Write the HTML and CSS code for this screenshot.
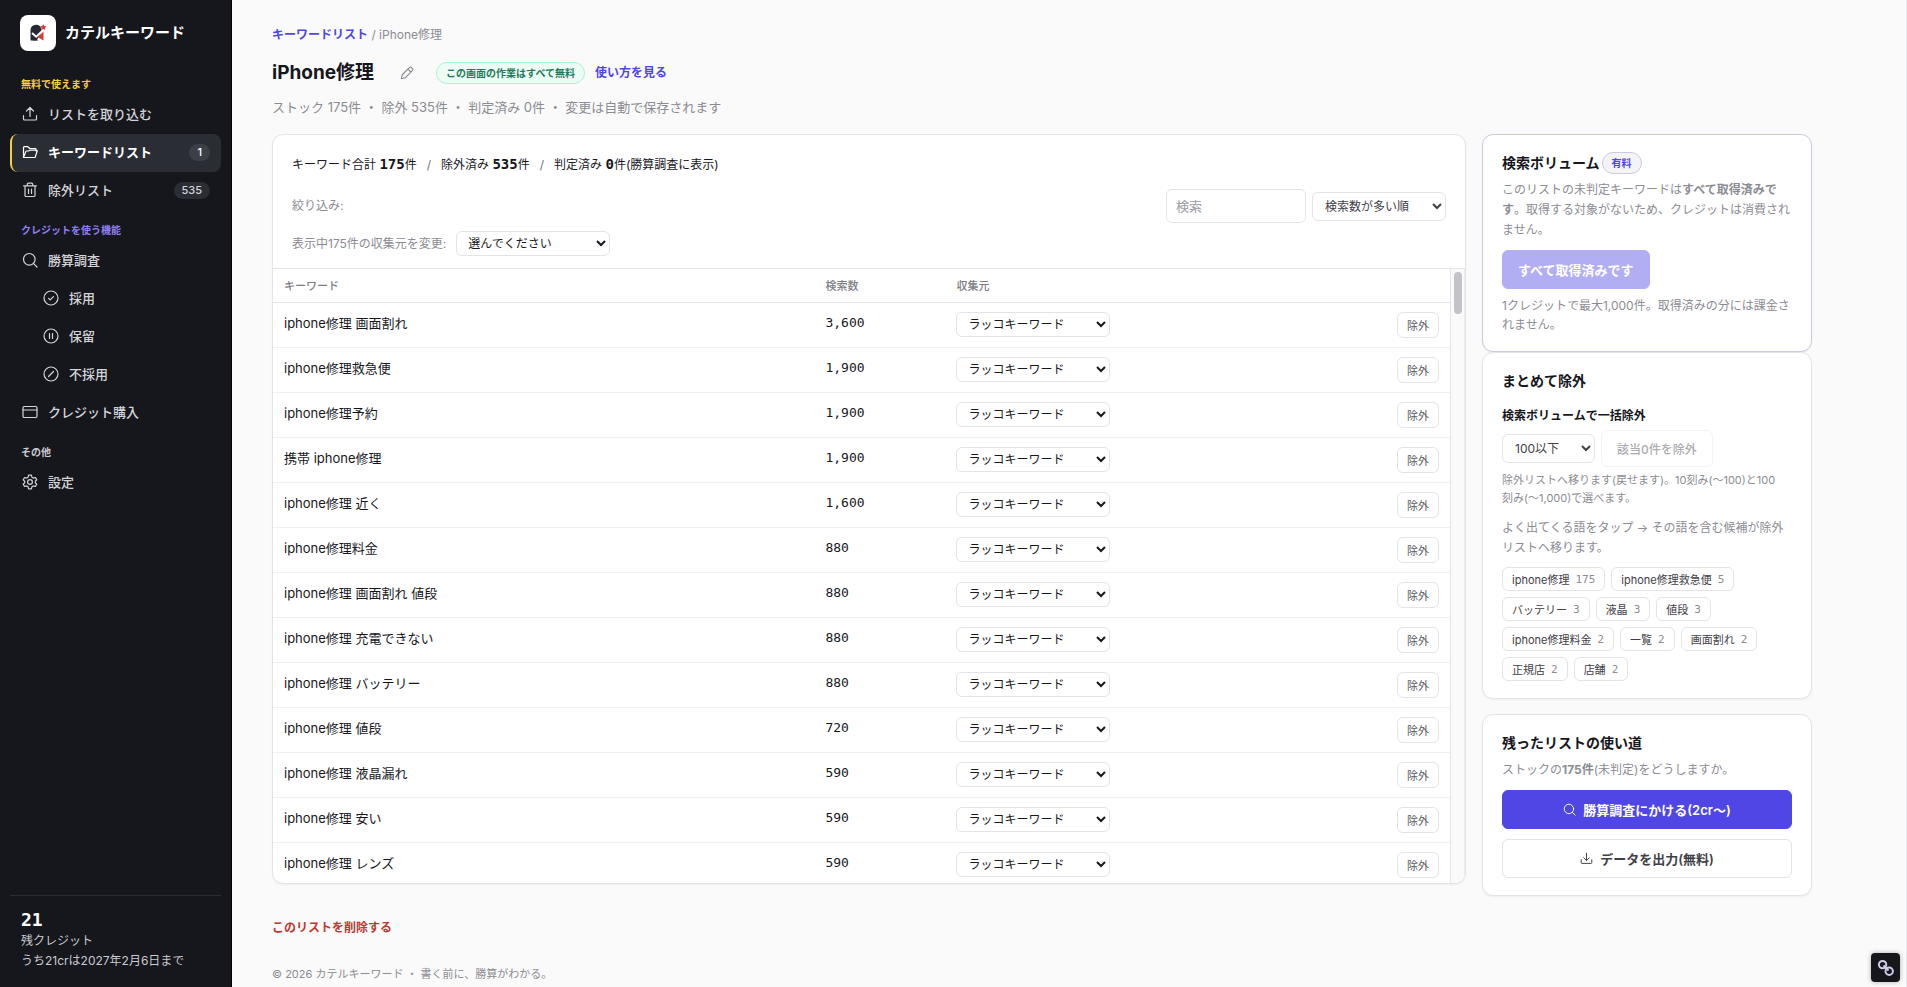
FILE: index.html
```html
<!DOCTYPE html>
<html lang="ja">
<head>
    <meta charset="UTF-8">
    <meta name="viewport" content="width=device-width, initial-scale=1">
    <title>iPhone修理 | カテルキーワード</title>
    <link rel="stylesheet" href="styles.css">
</head>
<body>
    <svg class="defs" aria-hidden="true">
        <symbol id="i-search" viewBox="0 0 16 16"><circle cx="7.3" cy="7.3" r="5.8"/><path d="M11.6 11.6 15 15"/></symbol>
        <symbol id="i-upload" viewBox="0 0 16 16"><path d="M8 10.5V1.5M4.5 5 8 1.5 11.5 5M1.5 9.5V13a1 1 0 0 0 1 1h11a1 1 0 0 0 1-1V9.5"/></symbol>
        <symbol id="i-download" viewBox="0 0 16 16"><path d="M8 1.5v9M4.5 7 8 10.5 11.5 7M1.5 9.5V13a1 1 0 0 0 1 1h11a1 1 0 0 0 1-1V9.5"/></symbol>
    </svg>
    <div class="app">
        <aside class="sidebar">
            <div class="brand">
                <span class="logo">
                    <svg width="18" height="18" viewBox="0 0 18 18">
                        <path d="M1.5 16.5V6.5a5.5 5.5 0 0 1 10.5-2.5l1 3.5-5.5 9Z" fill="#252a33"/>
                        <path d="M14.5 7.5v9L8.5 13Z" fill="#d63c36"/>
                        <path d="M14.5 16.5H9l-1.5-2-4 2Z" fill="#252a33"/>
                        <path d="m3 9 4.2 3.7 6.6-6.2" fill="none" stroke="#fff" stroke-width="2"/>
                        <path d="m14.3 0 1 2.1 2.2.3-1.6 1.5.4 2.2-2-1.1-2 1.1.4-2.2-1.6-1.5 2.2-.3Z" fill="#d63c36"/>
                    </svg>
                </span>
                <span class="brand-name">カテルキーワード</span>
            </div>
            <nav>
                <div class="nav-label free">無料で使えます</div>
                <a class="nav-item" href="#"><svg class="icon" width="16" height="16"><use href="#i-upload"/></svg>リストを取り込む</a>
                <a class="nav-item active" href="#">
                    <svg class="icon" width="16" height="16" viewBox="0 0 16 16"><path d="M1.5 13.5V3.5a.8.8 0 0 1 .8-.8h3.5l2 1.8h5.4a.8.8 0 0 1 .8.8V7M1.5 13.5l2.3-5.9a.9.9 0 0 1 .8-.6h2l1.2-.8h6.7a.7.7 0 0 1 .7.9l-1.9 5.9a.8.8 0 0 1-.7.5Z"/></svg>
                    キーワードリスト<span class="count">1</span>
                </a>
                <a class="nav-item" href="#">
                    <svg class="icon" width="16" height="16" viewBox="0 0 16 16"><path d="M1.5 3.8h13M5.3 3.5V2.2a1 1 0 0 1 1-1h3.4a1 1 0 0 1 1 1v1.3M3 4v9.5a1 1 0 0 0 1 1h8a1 1 0 0 0 1-1V4M6.5 7v4.5M9.5 7v4.5"/></svg>
                    除外リスト<span class="count">535</span>
                </a>
                <div class="nav-label paid">クレジットを使う機能</div>
                <a class="nav-item" href="#"><svg class="icon" width="16" height="16"><use href="#i-search"/></svg>勝算調査</a>
                <a class="nav-item sub" href="#"><svg class="icon" width="16" height="16" viewBox="0 0 16 16"><circle cx="8" cy="8" r="7"/><path d="m5.6 8.3 1.6 1.6 3.2-3.2"/></svg>採用</a>
                <a class="nav-item sub" href="#"><svg class="icon" width="16" height="16" viewBox="0 0 16 16"><circle cx="8" cy="8" r="7"/><path d="M6.5 5.5v5M9.5 5.5v5"/></svg>保留</a>
                <a class="nav-item sub" href="#"><svg class="icon" width="16" height="16" viewBox="0 0 16 16"><circle cx="8" cy="8" r="7"/><path d="m5.5 10.5 5-5"/></svg>不採用</a>
                <a class="nav-item" href="#"><svg class="icon" width="16" height="16" viewBox="0 0 16 16"><rect x="1" y="2.5" width="14" height="11" rx="1.2"/><path d="M1 6h14"/></svg>クレジット購入</a>
                <div class="nav-label">その他</div>
                <a class="nav-item" href="#">
                    <svg class="icon" width="16" height="16" viewBox="0 0 16 16"><circle cx="8" cy="8" r="2.4"/><path d="m6.6 1.2-.5 2-1.5.9-2-.6-1.4 2.4 1.5 1.4v1.4l-1.5 1.4 1.4 2.4 2-.6 1.5.9.5 2h2.8l.5-2 1.5-.9 2 .6 1.4-2.4-1.5-1.4V7.3l1.5-1.4-1.4-2.4-2 .6-1.5-.9-.5-2Z"/></svg>
                    設定
                </a>
            </nav>
            <div class="credits">
                <strong>21</strong>
                <div>残クレジット</div>
                <div>うち21crは2027年2月6日まで</div>
            </div>
        </aside>

        <main class="main">
            <div class="content">
                <div class="breadcrumb"><a href="#">キーワードリスト</a> / iPhone修理</div>
                <header class="page-head">
                    <h1>iPhone修理</h1>
                    <button class="edit" type="button" aria-label="名前を編集">
                        <svg class="icon" width="14" height="14" viewBox="0 0 16 16"><path d="M1.5 14.5 2.5 10 11 1.7a1.3 1.3 0 0 1 1.9 0l1.4 1.4a1.3 1.3 0 0 1 0 1.9L6 13.5ZM9 3.7 12.3 7"/></svg>
                    </button>
                    <span class="free-pill">この画面の作業はすべて無料</span>
                    <a href="#">使い方を見る</a>
                </header>
                <p class="summary">ストック 175件 ・ 除外 535件 ・ 判定済み 0件 ・ 変更は自動で保存されます</p>

                <div class="columns">
                    <section class="panel">
                        <div class="panel-head">
                            <div class="totals">キーワード合計 <b>175</b>件<i>/</i>除外済み <b>535</b>件<i>/</i>判定済み <b>0</b>件(勝算調査に表示)</div>
                            <div class="filters">
                                <span>絞り込み:</span>
                                <input type="search" placeholder="検索" aria-label="検索">
                                <select class="sort" aria-label="並び順"><option>検索数が多い順</option></select>
                            </div>
                            <div class="source-row">
                                <label for="bulk-source">表示中175件の収集元を変更:</label>
                                <select class="source" id="bulk-source"><option>選んでください</option></select>
                            </div>
                        </div>
                        <div class="list">
                            <div class="list-scroll">
                                <table>
                                    <thead>
                                        <tr><th class="c-key">キーワード</th><th class="c-num">検索数</th><th>収集元</th><th class="c-act"></th></tr>
                                    </thead>
                                    <tbody>
                                        <tr><td>iphone修理 画面割れ</td><td class="num">3,600</td><td><select class="source" aria-label="収集元"><option>ラッコキーワード</option></select></td><td class="act"><button type="button">除外</button></td></tr>
                                        <tr><td>iphone修理救急便</td><td class="num">1,900</td><td><select class="source" aria-label="収集元"><option>ラッコキーワード</option></select></td><td class="act"><button type="button">除外</button></td></tr>
                                        <tr><td>iphone修理予約</td><td class="num">1,900</td><td><select class="source" aria-label="収集元"><option>ラッコキーワード</option></select></td><td class="act"><button type="button">除外</button></td></tr>
                                        <tr><td>携帯 iphone修理</td><td class="num">1,900</td><td><select class="source" aria-label="収集元"><option>ラッコキーワード</option></select></td><td class="act"><button type="button">除外</button></td></tr>
                                        <tr><td>iphone修理 近く</td><td class="num">1,600</td><td><select class="source" aria-label="収集元"><option>ラッコキーワード</option></select></td><td class="act"><button type="button">除外</button></td></tr>
                                        <tr><td>iphone修理料金</td><td class="num">880</td><td><select class="source" aria-label="収集元"><option>ラッコキーワード</option></select></td><td class="act"><button type="button">除外</button></td></tr>
                                        <tr><td>iphone修理 画面割れ 値段</td><td class="num">880</td><td><select class="source" aria-label="収集元"><option>ラッコキーワード</option></select></td><td class="act"><button type="button">除外</button></td></tr>
                                        <tr><td>iphone修理 充電できない</td><td class="num">880</td><td><select class="source" aria-label="収集元"><option>ラッコキーワード</option></select></td><td class="act"><button type="button">除外</button></td></tr>
                                        <tr><td>iphone修理 バッテリー</td><td class="num">880</td><td><select class="source" aria-label="収集元"><option>ラッコキーワード</option></select></td><td class="act"><button type="button">除外</button></td></tr>
                                        <tr><td>iphone修理 値段</td><td class="num">720</td><td><select class="source" aria-label="収集元"><option>ラッコキーワード</option></select></td><td class="act"><button type="button">除外</button></td></tr>
                                        <tr><td>iphone修理 液晶漏れ</td><td class="num">590</td><td><select class="source" aria-label="収集元"><option>ラッコキーワード</option></select></td><td class="act"><button type="button">除外</button></td></tr>
                                        <tr><td>iphone修理 安い</td><td class="num">590</td><td><select class="source" aria-label="収集元"><option>ラッコキーワード</option></select></td><td class="act"><button type="button">除外</button></td></tr>
                                        <tr><td>iphone修理 レンズ</td><td class="num">590</td><td><select class="source" aria-label="収集元"><option>ラッコキーワード</option></select></td><td class="act"><button type="button">除外</button></td></tr>
                                    </tbody>
                                </table>
                            </div>
                            <div class="track"><div class="thumb"></div></div>
                        </div>
                    </section>

                    <div class="side">
                        <section class="card volume">
                            <h2>検索ボリューム <span class="paid-pill">有料</span></h2>
                            <p>このリストの未判定キーワードは<b>すべて取得済みです</b>。取得する対象がないため、クレジットは消費されません。</p>
                            <button class="btn primary" type="button" disabled>すべて取得済みです</button>
                            <p class="note">1クレジットで最大1,000件。取得済みの分には課金されません。</p>
                        </section>
                        <section class="card bulk">
                            <h2>まとめて除外</h2>
                            <h3><label for="limit">検索ボリュームで一括除外</label></h3>
                            <div class="bulk-row">
                                <select id="limit"><option>100以下</option></select>
                                <button class="btn small" type="button" disabled>該当0件を除外</button>
                            </div>
                            <p class="hint">除外リストへ移ります(戻せます)。10刻み(〜100)と100<br>刻み(〜1,000)で選べます。</p>
                            <p>よく出てくる語をタップ → その語を含む候補が除外リストへ移ります。</p>
                            <div class="chips">
                                <button type="button">iphone修理<span>175</span></button>
                                <button type="button">iphone修理救急便<span>5</span></button>
                                <button type="button">バッテリー<span>3</span></button>
                                <button type="button">液晶<span>3</span></button>
                                <button type="button">値段<span>3</span></button>
                                <button type="button">iphone修理料金<span>2</span></button>
                                <button type="button">一覧<span>2</span></button>
                                <button type="button">画面割れ<span>2</span></button>
                                <button type="button">正規店<span>2</span></button>
                                <button type="button">店舗<span>2</span></button>
                            </div>
                        </section>
                        <section class="card next">
                            <h2>残ったリストの使い道</h2>
                            <p>ストックの<b>175件</b>(未判定)をどうしますか。</p>
                            <button class="btn primary" type="button"><svg class="icon" width="13" height="13"><use href="#i-search"/></svg>勝算調査にかける(2cr〜)</button>
                            <button class="btn" type="button"><svg class="icon" width="13" height="13"><use href="#i-download"/></svg>データを出力(無料)</button>
                        </section>
                    </div>
                </div>

                <a class="delete" href="#">このリストを削除する</a>
                <footer>© 2026 カテルキーワード ・ 書く前に、勝算がわかる。</footer>
            </div>
        </main>
    </div>
    <button class="link-fab" type="button" aria-label="リンク">
        <svg width="18" height="18" viewBox="0 0 18 18"><circle cx="5.6" cy="5.6" r="3.7"/><circle cx="12.2" cy="12.2" r="3.7"/><path d="m6.5 6.5 5 5"/></svg>
    </button>
</body>
</html>
```

FILE: styles.css
```css
* { box-sizing: border-box; }
body { margin: 0; font-family: Inter, "Noto Sans CJK JP", sans-serif; font-size: 12px; line-height: 20px; color: #16171d; background: #fafafa; }
button, input, select { font-family: inherit; font-size: 12px; color: inherit; }
button { cursor: pointer; }
h1, h2, h3, p { margin: 0; }
a { color: #4f46e5; font-weight: 600; text-decoration: none; }
.defs { display: none; }
.icon { flex: none; fill: none; stroke: currentColor; stroke-width: 1.2; stroke-linecap: round; stroke-linejoin: round; }
.app { display: flex; min-height: 100vh; }

/* sidebar */
.sidebar { position: sticky; top: 0; display: flex; flex-direction: column; flex: none; width: 232px; height: 100vh; padding: 15px 10px 16px; background: #16171d; border-right: 1px solid #000; color: #d3d4d8; }
.brand { display: flex; align-items: center; gap: 9px; padding-left: 10px; margin-bottom: 13px; }
.logo { display: flex; align-items: center; justify-content: center; width: 36px; height: 36px; border-radius: 8px; background: #fff; }
.brand-name { font-size: 15px; font-weight: 700; color: #fff; }
.nav-label { padding: 12px 11px 4px; font-size: 10px; font-weight: 700; line-height: 16px; color: #c9cacf; }
.nav-label.free { color: #f5cf45; }
.nav-label.paid { color: #8f7ff0; }
.nav-item { display: flex; align-items: center; gap: 10px; height: 38px; padding: 0 11px 2px 10px; border-left: 2px solid transparent; border-radius: 8px; font-size: 13px; font-weight: 500; color: #d3d4d8; }
.nav-item.active { background: #2a2d34; border-left-color: #f5cf45; color: #fff; font-weight: 600; }
.nav-item.sub { padding-left: 31px; }
.count { margin-left: auto; padding: 0 8px; border-radius: 9px; background: #2a2d34; font-size: 11px; font-weight: 500; line-height: 17px; color: #d3d4d8; }
.active .count { background: #3c3f46; color: #fff; }
.credits { margin-top: auto; padding: 13px 11px 0; border-top: 1px solid #2c2d33; color: #c9cacf; }
.credits strong { display: block; font-family: "DejaVu Sans Mono", monospace; font-size: 18px; line-height: 22px; color: #fff; }

/* main column */
.main { flex: 1; min-width: 0; border-right: 1px solid #e4e4e7; }
.content { max-width: 1620px; padding: 25px 40px 0; }
.breadcrumb { color: #8b8c93; }
.page-head { display: flex; align-items: center; height: 32px; margin: 12px 0 8px; }
h1 { font-size: 19px; font-weight: 700; }
.edit { display: flex; margin: 0 22px 0 26px; padding: 0; border: 0; background: none; color: #85868d; }
.free-pill { margin-right: 10px; padding: 0 9px; border: 1px solid #a7f3d0; border-radius: 11px; background: #ecfdf5; font-size: 10px; font-weight: 700; color: #1f7a5c; }
.summary { margin-bottom: 17px; font-size: 13px; color: #8b8c93; }
.columns { display: grid; grid-template-columns: minmax(0, 1fr) 330px; gap: 16px; align-items: start; }

.panel, .card { background: #fff; border: 1px solid #e4e4e7; border-radius: 11px; box-shadow: 0 1px 2px rgba(0,0,0,0.05); }
.panel { overflow: hidden; }
.panel-head { padding: 19px 19px 12px; border-bottom: 1px solid #e4e4e7; color: #8b8c93; }
.totals { color: #16171d; }
.totals b { font-family: "DejaVu Sans Mono", monospace; font-size: 14px; }
.totals i { margin: 0 10px; font-style: normal; color: #6f7077; }
.filters { display: flex; align-items: center; gap: 6px; margin: 14px 0 8px; }
.filters span { margin-right: auto; }
.filters input { width: 140px; height: 34px; padding: 0 9px; border: 1px solid #e4e4e7; border-radius: 6px; background: #fff; font-size: 13px; }
input::placeholder { color: #9a9ba2; }
select { padding: 0 8px; border: 1px solid #e4e4e7; border-radius: 6px; background: #fff; }
.sort { width: 134px; height: 29px; color: #3f4047; }
.source-row { display: flex; align-items: center; gap: 10px; }
.source { display: block; width: 154px; height: 25px; padding: 0 7px; color: #16171d; }

.list { display: flex; }
.list-scroll { flex: 1; min-width: 0; height: calc(100vh - 373px); overflow-y: auto; scrollbar-width: none; }
.track { width: 15px; padding: 3px 0 0 3px; border-left: 1px solid #e4e4e7; border-right: 1px solid #ececee; background: #fafafa; }
.thumb { width: 8px; height: 42px; border-radius: 4px; background: #c2c2c9; }
table { width: 100%; table-layout: fixed; border-collapse: separate; border-spacing: 0; }
th { position: sticky; top: 0; z-index: 1; height: 34px; padding: 0 11px; border-bottom: 1px solid #e4e4e7; background: #fff; font-size: 11px; font-weight: 500; text-align: left; color: #7c7d84; }
td { height: 45px; padding: 9px 11px; border-bottom: 1px solid #f0f0f2; font-size: 13px; line-height: 22px; vertical-align: top; }
.c-key { width: 46%; }
.c-num { width: 131px; }
.c-act { width: 80px; }
.num { font-family: "DejaVu Sans Mono", monospace; }
.act { text-align: right; }
.act button { display: block; width: 42px; height: 26px; margin-left: auto; padding: 0; border: 1px solid #e4e4e7; border-radius: 6px; background: #fff; font-size: 11px; color: #55565d; }

/* right column */
.card { padding: 17px 19px; margin-bottom: 15px; color: #8b8c93; }
.card:last-child { margin-bottom: 0; }
.volume { border-color: #cbcae0; margin-bottom: 0; }
h2 { display: flex; align-items: center; gap: 2px; font-size: 14px; line-height: 22px; color: #16171d; }
h2 + p { margin: 6px 0 10px; }
.paid-pill { padding: 0 9px; border: 1px solid #cbcae0; border-radius: 11px; background: #f4f4f5; font-size: 10px; line-height: 20px; color: #4f46e5; }
.btn { display: flex; align-items: center; justify-content: center; gap: 7px; height: 39px; padding: 0 15px; border: 1px solid #e4e4e7; border-radius: 6px; background: #fff; font-size: 13px; font-weight: 600; color: #3f4047; }
.btn.primary { border-color: #4f46e5; background: #4f46e5; color: #fff; }
.btn:disabled { opacity: 0.43; cursor: default; }
.note { margin-top: 7px; line-height: 19px; }
h3 { margin: 14px 0 4px; font-size: 12px; color: #16171d; }
.bulk-row { display: flex; align-items: center; gap: 6px; }
.bulk-row select { width: 93px; height: 29px; color: #3f4047; }
.btn.small { height: 37px; font-size: 12px; font-weight: 500; }
.hint { margin: 4px 0 11px; font-size: 11px; line-height: 18px; }
.chips { display: flex; flex-wrap: wrap; gap: 6px; margin-top: 9px; }
.chips button { display: flex; align-items: center; gap: 6px; height: 24px; padding: 0 9px; border: 1px solid #e4e4e7; border-radius: 6px; background: #fff; font-size: 11px; color: #3f4047; }
.chips span { font-family: "DejaVu Sans Mono", monospace; font-size: 11px; color: #8b8c93; }
.next .btn { width: 100%; }
.next .btn + .btn { margin-top: 10px; }

.delete { display: inline-block; margin-top: 22px; color: #b93a32; }
footer { margin-top: 26px; font-size: 11px; color: #8b8c93; }

.link-fab { position: fixed; right: 7px; bottom: 5px; display: flex; align-items: center; justify-content: center; width: 29px; height: 29px; padding: 0; border: 0; border-radius: 4px; background: #16171d; box-shadow: 0 0 5px rgba(0,0,0,0.3); }
.link-fab svg { fill: none; stroke: #cfcbe8; stroke-width: 2; }
```
